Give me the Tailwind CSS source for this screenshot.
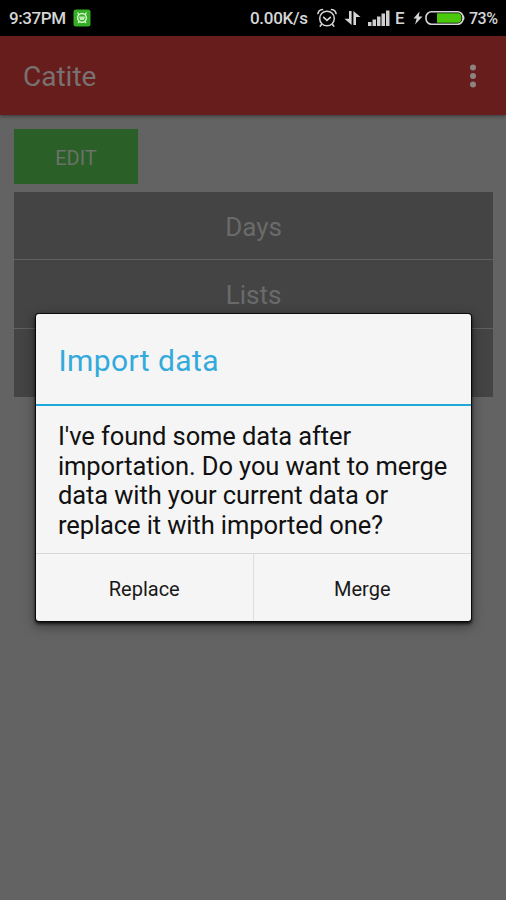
<!DOCTYPE html>
<html lang="en">
<head>
<meta charset="utf-8">
<title>Catite</title>
<script src="https://cdn.jsdelivr.net/npm/@tailwindcss/browser@4"></script>
</head>
<body class="font-['Roboto',sans-serif]">
<div class="relative flex h-[900px] w-[506px] flex-col overflow-hidden bg-[#636363]">
  <!-- Status bar -->
  <header class="flex h-9 shrink-0 items-center bg-black pl-[9px] pr-2 text-[17px] font-medium leading-none text-[#d6d6d6]">
    <span class="w-16 whitespace-nowrap pt-px tracking-[-0.4px]">9:37PM</span>
    <svg class="h-[18px] w-[18px]" viewBox="0 0 18 18" fill="none">
      <rect x=".5" y=".5" width="17" height="17" rx="2.5" fill="#35ad25"/>
      <path d="M4.5 3.5 6 6M13.5 3.5 12 6M5 14l1.5-2M13 14l-1.5-2" stroke="#d5f4cf" stroke-width="1.3"/>
      <circle cx="9" cy="8.8" r="4.4" stroke="#d5f4cf" stroke-width="1.5"/>
      <path d="M6 7.500h6l-1 3.500H7z" fill="#b9edb0"/>
    </svg>
    <span class="ml-[159px] w-[66px] whitespace-nowrap pt-px tracking-[-0.3px]">0.00K/s</span>
    <svg class="h-[22px] w-[22px]" viewBox="0 0 22 22" fill="none" stroke="#d6d6d6" stroke-linecap="round">
      <circle cx="11" cy="11.5" r="7.3" stroke-width="1.5"/>
      <path d="M2 6.5C2.3 4.2 4 2.8 6.5 2.5M20 6.5c-.3-2.3-2-3.7-4.5-4M7.700 10.300l3.300 3 3.300-3M5.500 17.500 4.300 19M16.500 17.500l1.200 1.500" stroke-width="1.7"/>
    </svg>
    <svg class="ml-[6px] h-[18px] w-[17px]" viewBox="0 0 17 18" fill="#d6d6d6">
      <path d="M5 2h2.600v14L.5 9.800h4.500zM9.400 16H12V8h4.500L9.400 2z"/>
    </svg>
    <svg class="ml-[7px] h-[18px] w-[22px]" viewBox="0 0 22 18" fill="#cfcfcf">
      <path d="M0 13h3.500v4H0zM4.500 10.500H8V17H4.500zM9 7.500h3.500V17H9zM13.500 4.500H17V17h-3.500zM18 1.500h3.500V17H18z"/>
    </svg>
    <span class="ml-[5px] w-[18px] pt-px">E</span>
    <svg class="h-4 w-[10px]" viewBox="0 0 10 16" fill="#d6d6d6"><path d="M6.500 1.500.5 8.500h3.200L2 14.500l7.500-8H5.800z"/></svg>
    <svg class="ml-[2px] h-4 w-[41px]" viewBox="0 0 41 16" fill="none">
      <rect x="1" y="1.800" width="37" height="12.400" rx="5.500" stroke="#d6d6d6" stroke-width="1.600"/>
      <path d="M38 5.500c2 .5 2 4.500 0 5z" fill="#d6d6d6"/>
      <path d="M12 3.300h21.500c4 0 4 9.400 0 9.400H12z" fill="#4cc80c"/>
    </svg>
    <span class="ml-[3px] whitespace-nowrap pt-[2px] text-[16px] tracking-[-0.5px]">73%</span>
  </header>

  <!-- App bar -->
  <div class="flex h-[79px] shrink-0 items-center justify-between bg-[#671d1c] pl-[23px] pr-[30px] shadow-[0_1px_4px_rgba(0,0,0,0.45)]">
    <h1 class="pt-[3px] text-[28px] text-[#777270]">Catite</h1>
    <svg class="h-6 w-[6px]" viewBox="0 0 6 24" fill="#8b8580"><circle cx="3" cy="3.400" r="3"/><circle cx="3" cy="12" r="3"/><circle cx="3" cy="20.600" r="3"/></svg>
  </div>

  <main class="flex flex-col items-start px-[14px] pt-[14px]">
    <button class="h-[55px] w-[124px] bg-[#2a5f27] pt-[3px] text-[20px] text-[#6b716a]">EDIT</button>
    <ul class="mt-2 w-[479px] divide-y divide-[#606060] bg-[#444] text-center text-[26px] text-[#6a6a6a]">
      <li class="h-[68px] pt-[2px] leading-[67px]">Days</li>
      <li class="h-[69px] pt-[2px] leading-[67px]">Lists</li>
      <li class="h-[68px]"></li>
    </ul>
  </main>

  <!-- Import dialog -->
  <section role="dialog" class="absolute left-[36px] top-[314px] flex h-[307px] w-[435px] flex-col rounded-[3px] bg-[#f5f5f5] shadow-[0_0_0_1px_rgba(0,0,0,0.75),0_2px_3px_1px_rgba(0,0,0,0.7),0_4px_12px_2px_rgba(0,0,0,0.35)]">
    <h2 class="h-[92px] shrink-0 border-b-2 border-[#1fa9d8] pl-[22.500px] pt-[2px] text-[30px] leading-[90px] tracking-[0.4px] text-[#33aadc]">Import data</h2>
    <p class="h-[147px] shrink-0 whitespace-nowrap pl-[22px] pt-[16px] text-[25.500px] leading-[29.500px] tracking-[-0.1px] text-[#111]">I've found some data after<br>importation. Do you want to merge<br>data with your current data or<br>replace it with imported one?</p>
    <div class="grid flex-1 grid-cols-2 border-t border-[#d8d8d8] text-[20px] text-[#191919]">
      <button class="border-r border-[#dedede] pt-[2px]">Replace</button>
      <button class="pt-[2px]">Merge</button>
    </div>
  </section>
</div>
</body>
</html>
